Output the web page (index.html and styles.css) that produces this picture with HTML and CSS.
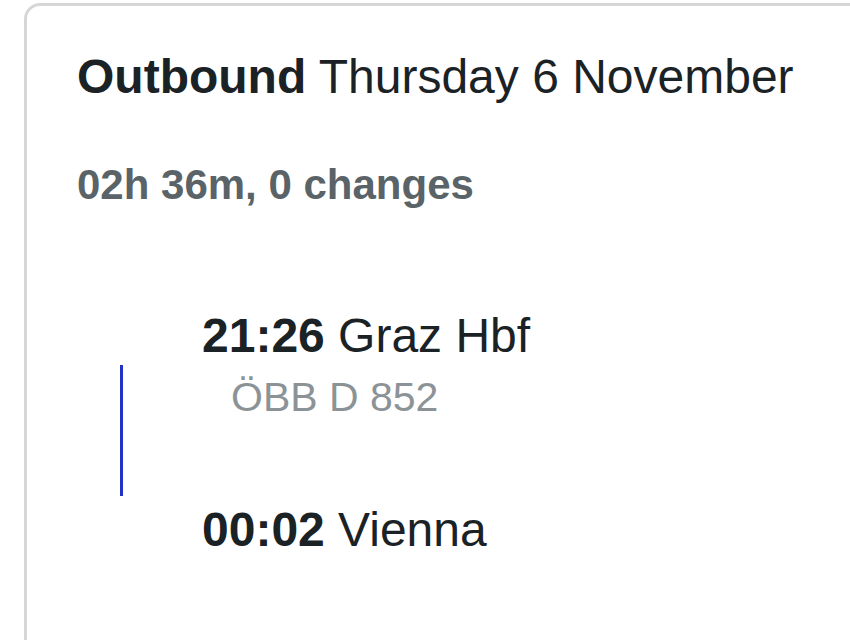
FILE: index.html
```html
<!DOCTYPE html>
<html lang="en">
<head>
<meta charset="utf-8">
<title>Outbound journey</title>
<link rel="stylesheet" href="styles.css">
</head>
<body>
<section class="card">
  <h2 class="title"><strong>Outbound</strong> Thursday 6 November</h2>
  <p class="summary">02h 36m, 0 changes</p>
  <ol class="journey">
    <li class="row stop">
      <span class="rail"></span>
      <span class="stop-text"><strong>21:26</strong> Graz Hbf</span>
    </li>
    <li class="row leg">
      <span class="rail"><span class="line"></span></span>
      <span class="service">ÖBB D 852</span>
    </li>
    <li class="row stop stop-end">
      <span class="rail"></span>
      <span class="stop-text"><strong>00:02</strong> Vienna</span>
    </li>
  </ol>
</section>
</body>
</html>
```
FILE: styles.css
```css
html, body {
  margin: 0;
  padding: 0;
  background: #ffffff;
  overflow: hidden;
}

body {
  width: 850px;
  height: 640px;
  font-family: "Liberation Sans", Arial, Helvetica, sans-serif;
  color: #1b2226;
}

.card {
  box-sizing: border-box;
  width: 826px;
  height: 637px;
  margin: 3px 0 0 24px;
  border: 3px solid #d6d6d6;
  border-right: 0;
  border-bottom: 0;
  border-radius: 16px 0 0 0;
  padding: 43px 0 0 50px;
  background: #ffffff;
}

.title {
  margin: 0;
  font-size: 48px;
  line-height: 56px;
  font-weight: 400;
  color: #1b2226;
  white-space: nowrap;
}

.title strong {
  font-weight: 700;
}

.summary {
  margin: 55px 0 0;
  font-size: 42px;
  line-height: 50px;
  font-weight: 700;
  color: #5a6368;
}

.journey {
  list-style: none;
  margin: 98px 0 0;
  padding: 0;
}

.row {
  display: grid;
  grid-template-columns: 125px 1fr;
}

.stop-text {
  font-size: 48px;
  line-height: 56px;
  color: #1b2226;
  white-space: nowrap;
}

.stop-text strong {
  font-weight: 700;
}

.leg {
  margin-top: 1px;
  min-height: 131px;
}

.rail {
  display: flex;
}

.line {
  width: 3px;
  margin-left: 43px;
  background: #2333c9;
}

.service {
  padding: 8px 0 0 29px;
  font-size: 41px;
  line-height: 48px;
  color: #8c9397;
}

.stop-end {
  margin-top: 6px;
}
```
